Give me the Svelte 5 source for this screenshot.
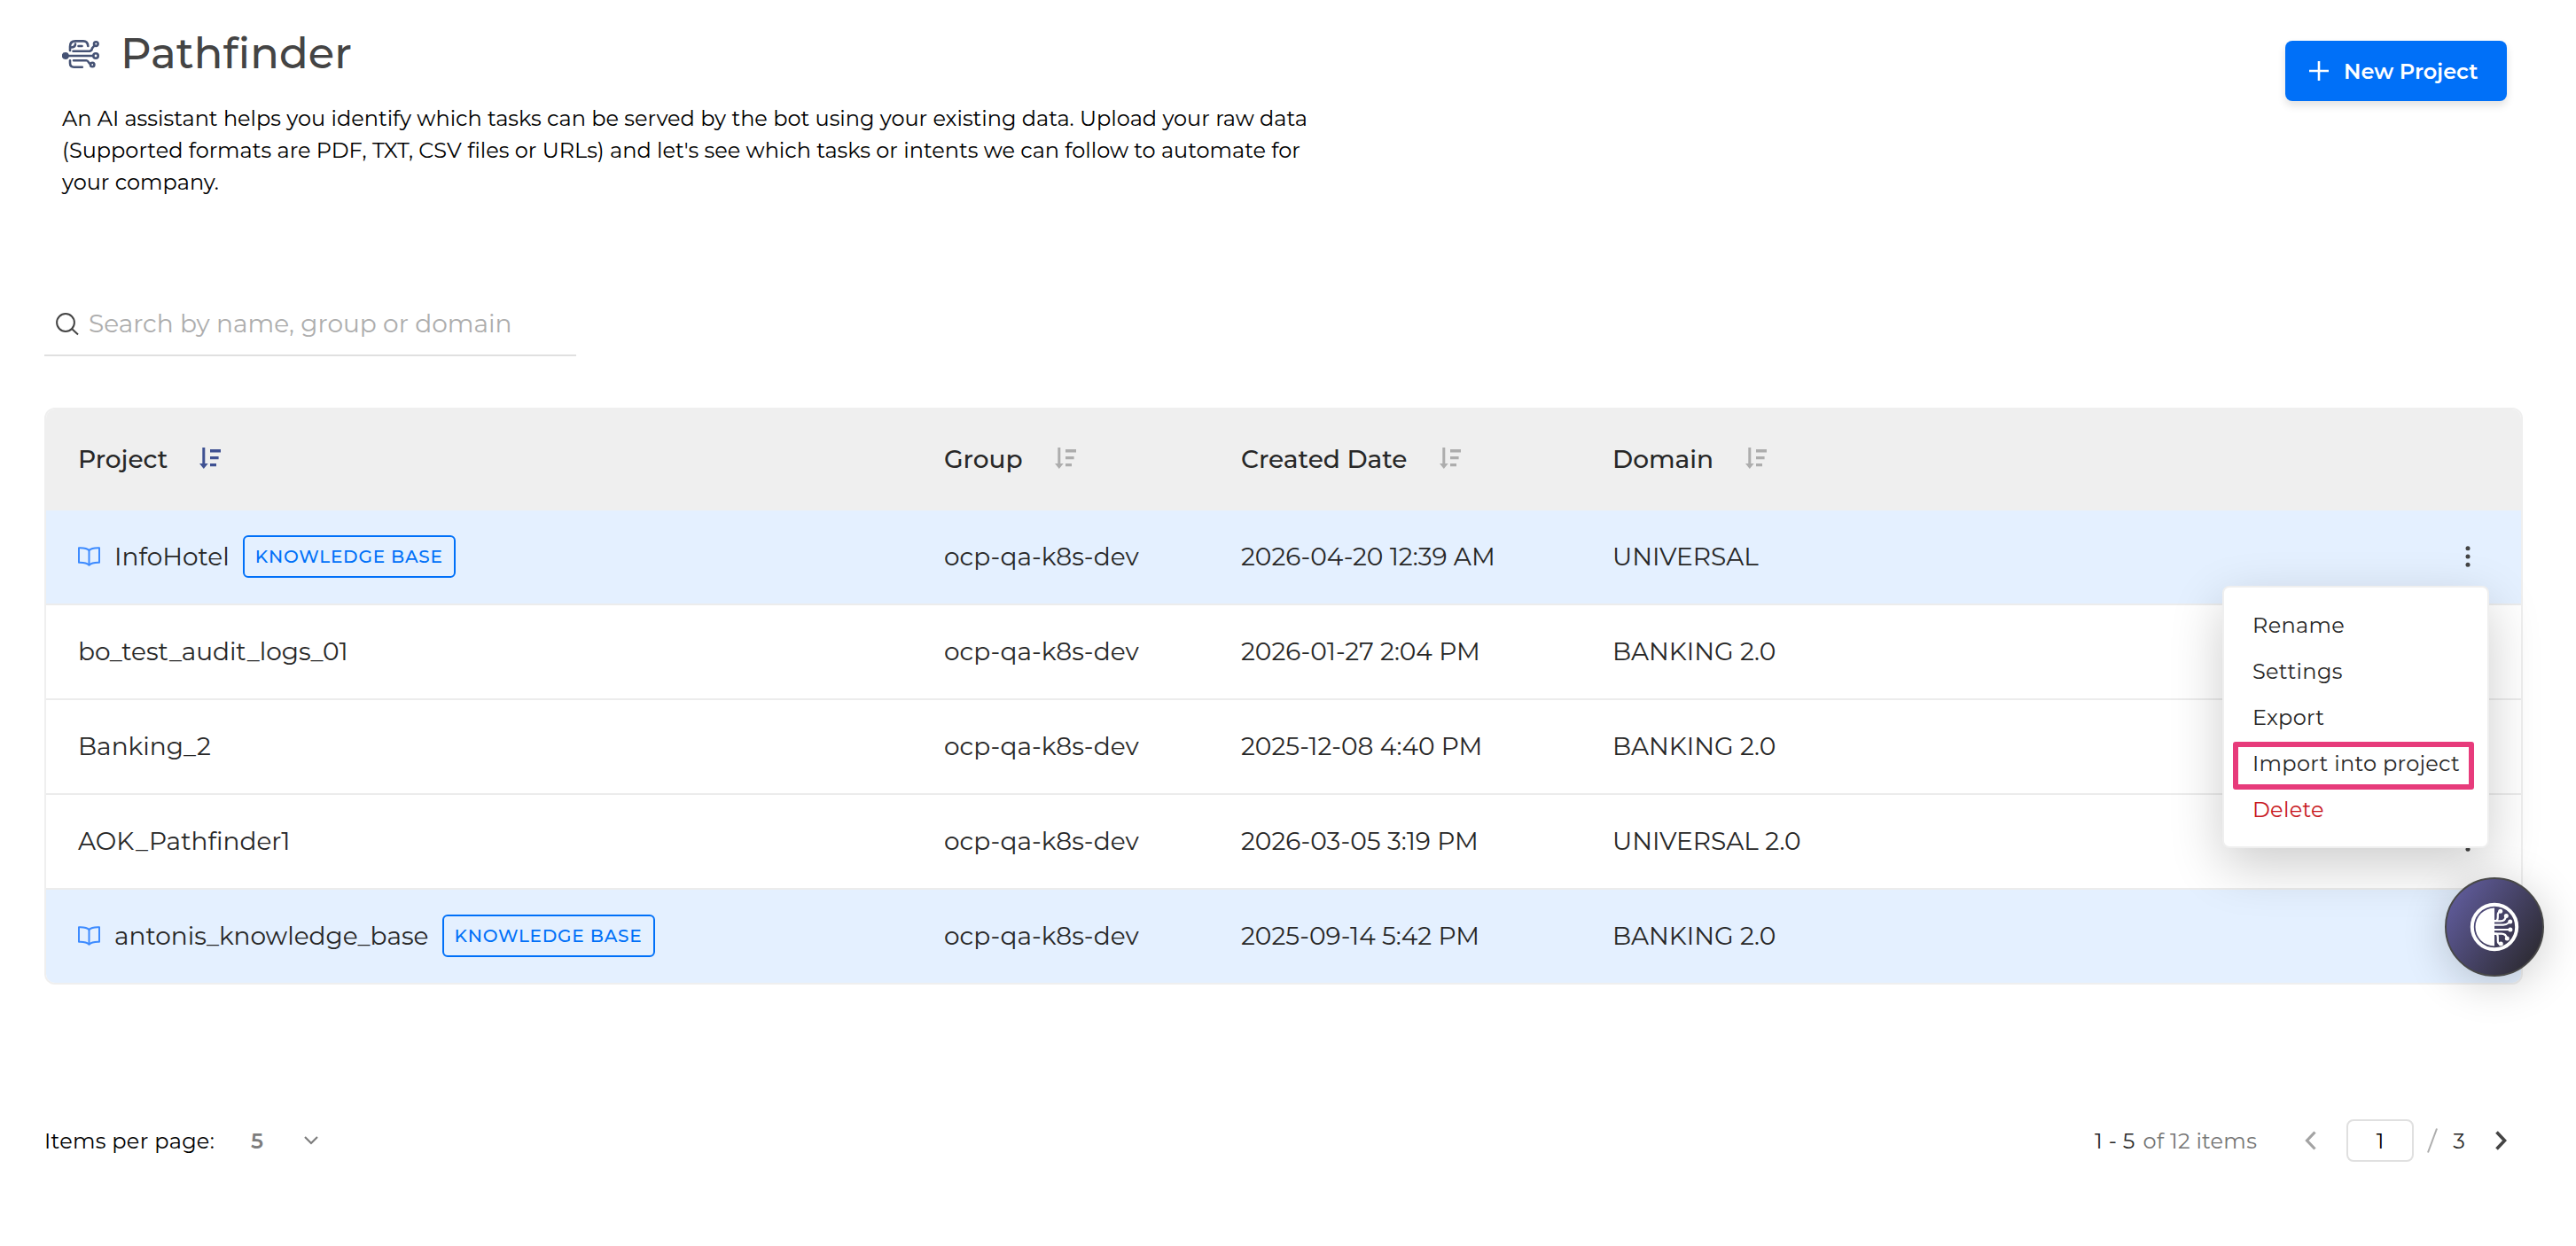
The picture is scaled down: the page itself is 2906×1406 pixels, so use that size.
<script>
  let search = '';
  let page = 1;
  let openMenu = 0;

  const columns = [
    { title: 'Project', active: true },
    { title: 'Group' },
    { title: 'Created Date' },
    { title: 'Domain' }
  ];

  const projects = [
    { name: 'InfoHotel', group: 'ocp-qa-k8s-dev', created: '2026-04-20 12:39 AM', domain: 'UNIVERSAL', kb: true },
    { name: 'bo_test_audit_logs_01', group: 'ocp-qa-k8s-dev', created: '2026-01-27 2:04 PM', domain: 'BANKING 2.0' },
    { name: 'Banking_2', group: 'ocp-qa-k8s-dev', created: '2025-12-08 4:40 PM', domain: 'BANKING 2.0' },
    { name: 'AOK_Pathfinder1', group: 'ocp-qa-k8s-dev', created: '2026-03-05 3:19 PM', domain: 'UNIVERSAL 2.0' },
    { name: 'antonis_knowledge_base', group: 'ocp-qa-k8s-dev', created: '2025-09-14 5:42 PM', domain: 'BANKING 2.0', kb: true }
  ];

  const actions = [
    { label: 'Rename' },
    { label: 'Settings' },
    { label: 'Export' },
    { label: 'Import into project', highlight: true },
    { label: 'Delete', danger: true }
  ];

  function toggleMenu(index) {
    openMenu = openMenu === index ? -1 : index;
  }
</script>

<main>
  <header>
    <div class="intro">
      <div class="title">
        <svg class="brain" viewBox="0 0 42 32" fill="none" stroke="#465375" stroke-width="2.6" stroke-linecap="round" stroke-linejoin="round">
          <path d="M9 12V7.5C9 3.5 11.5 1.4 15 1.4h9c3.2 0 5 1.8 5.3 5.6" />
          <path d="M10 8.5c3 0 5-1.5 5-4M18.5 7h4" />
          <path d="M12.5 12.8h17c3 0 4.3-1.5 4.5-3.5l2-2.3" />
          <circle cx="38.3" cy="4.6" r="2.3" />
          <circle cx="3.8" cy="18" r="2.7" fill="#465375" />
          <path d="M5 18h30" />
          <circle cx="38" cy="18" r="2.7" />
          <path d="M13 23.3h14.5c2.5 0 2.5 3.7 4.5 3.7" />
          <circle cx="34.2" cy="28" r="2.2" />
          <path d="M9 23.3v3c0 3 1.8 4.4 4.3 4.4h9.5" />
        </svg>
        <h1>Pathfinder</h1>
      </div>
      <p>
        An AI assistant helps you identify which tasks can be served by the bot using your existing data. Upload your raw data
        (Supported formats are PDF, TXT, CSV files or URLs) and let's see which tasks or intents we can follow to automate for
        your company.
      </p>
    </div>
    <button class="new-project">
      <svg viewBox="0 0 22 22" stroke="#fff" stroke-width="2.6"><path d="M11 0v22M0 11h22" /></svg>
      <span>New Project</span>
    </button>
  </header>

  <div class="search">
    <svg viewBox="0 0 26 26" fill="none" stroke="#444" stroke-width="2">
      <circle cx="11" cy="11" r="9.9" />
      <path d="M18 18l7 6.5" />
    </svg>
    <input placeholder="Search by name, group or domain" bind:value={search} />
  </div>

  <div class="table">
    <div class="row head">
      {#each columns as column}
        <div class="cell">
          <span>{column.title}</span>
          <svg class="sort" class:active={column.active} viewBox="0 0 24 24">
            <path d="M3.3 0h3v18h3.4L4.8 24 0 18h3.3z" />
            <path d="M12 2h12v3.4H12zM12 10h9.6v3.2H12zM12 18h7v3.2h-7z" />
          </svg>
        </div>
      {/each}
    </div>

    {#each projects as project, i}
      <div class="row" class:kb={project.kb}>
        <div class="cell">
          {#if project.kb}
            <svg class="book" viewBox="0 0 25 22" fill="none" stroke="#3d8bff" stroke-width="2" stroke-linejoin="round">
              <path d="M12.5 4C10.5 1.8 6 1 1 1.2v16.5c4.6-.2 9 .5 11.500 3 2.500-2.500 6.900-3.200 11.500-3V1.2C19 1 14.500 1.8 12.500 4z" />
              <path d="M12.5 4v16.5" />
            </svg>
          {/if}
          <span>{project.name}</span>
          {#if project.kb}
            <span class="badge">KNOWLEDGE BASE</span>
          {/if}
        </div>
        <div class="cell">{project.group}</div>
        <div class="cell">{project.created}</div>
        <div class="cell">{project.domain}</div>
        <button class="dots" aria-label="Actions" on:click={() => toggleMenu(i)}>
          <svg viewBox="0 0 6 24" fill="#444">
            <circle cx="3" cy="2.7" r="2.5" /><circle cx="3" cy="12" r="2.5" /><circle cx="3" cy="21.3" r="2.5" />
          </svg>
        </button>
        {#if openMenu === i}
          <ul class="menu">
            {#each actions as action}
              <li class:highlight={action.highlight} class:danger={action.danger}>{action.label}</li>
            {/each}
          </ul>
        {/if}
      </div>
    {/each}
  </div>

  <footer>
    <span class="per-page">Items per page:</span>
    <span class="size">5</span>
    <svg class="chevron" viewBox="0 0 16 10" fill="none" stroke="#7d7d7d" stroke-width="2.2"><path d="M1 1l7 7 7-7" /></svg>
    <span class="range">1 - 5</span>
    <span class="total">of 12 items</span>
    <svg class="prev" viewBox="0 0 13 22" fill="none" stroke="#a3a3a3" stroke-width="3.2"><path d="M11.5 1.5L2.5 11l9 9.5" /></svg>
    <input class="page" bind:value={page} />
    <svg class="slash" viewBox="0 0 12 28" stroke="#adadad" stroke-width="2"><path d="M11 .5L1 27.5" /></svg>
    <span class="pages">3</span>
    <svg class="next" viewBox="0 0 13 22" fill="none" stroke="#444" stroke-width="3.6"><path d="M1.5 1.5L10.5 11l-9 9.5" /></svg>
  </footer>
</main>

<button class="assistant" aria-label="Assistant">
  <svg viewBox="0 0 56 56" fill="none" stroke="#fff" stroke-width="2.2" stroke-linecap="round">
    <circle cx="28" cy="28" r="25.2" stroke-width="4" />
    <path d="M28 6.5a21.5 21.5 0 0 0 0 43z" fill="#fff" stroke="none" />
    <path d="M28 21h1.5c2 0 2.3-1.5 2.3-4v-3c0-2 1-3 3-4" />
    <path d="M28 21.3h7c4 0 5.5-2 6-6" />
    <path d="M28 25.7h10c3.5 0 5-1.5 7.5-3.5" />
    <path d="M28 31h18" />
    <path d="M28 35.7h8c4 0 5.500 2 6 5.500" />
    <path d="M28 35.7h1.500c2 0 2.300 1.500 2.300 4v4c0 2 1 3.500 3.500 4" />
    <g fill="#fff" stroke="none">
      <circle cx="34.7" cy="10.2" r="2.5" />
      <circle cx="41.3" cy="15.6" r="2.5" />
      <circle cx="45.7" cy="22" r="2.5" />
      <circle cx="45.9" cy="31" r="2.5" />
      <circle cx="42.3" cy="41" r="2.5" />
      <circle cx="35.3" cy="47" r="2.5" />
    </g>
  </svg>
</button>

<style>
  :global(body) {
    margin: 0;
    background: #fff;
  }

  main {
    box-sizing: border-box;
    width: 2906px;
    height: 1406px;
    padding: 33px 60px 0 50px;
    font-family: 'Montserrat', 'Inter', sans-serif;
    font-size: 24px;
    color: #272727;
  }

  button {
    font: inherit;
    border: none;
    cursor: pointer;
  }

  input {
    font: inherit;
    border: none;
    outline: none;
    background: none;
  }

  header {
    display: flex;
    justify-content: space-between;
    align-items: flex-start;
    height: 297px;
    padding: 0 18px 0 20px;
  }

  .title {
    display: flex;
    align-items: center;
    gap: 24px;
    height: 54px;
  }

  .brain {
    width: 42px;
    height: 32px;
    margin-top: 2px;
  }

  h1 {
    margin: 0;
    font-size: 48px;
    font-weight: 500;
    line-height: 54px;
    letter-spacing: 0.1px;
    color: #444;
  }

  p {
    width: 1425px;
    margin: 29px 0 0;
    line-height: 36px;
    color: #000;
  }

  .new-project {
    display: flex;
    align-items: center;
    gap: 17px;
    width: 250px;
    height: 68px;
    margin-top: 13px;
    padding: 0 0 0 27px;
    border-radius: 8px;
    background: #0070f8;
    color: #fff;
    font-weight: 600;
    white-space: nowrap;
    box-shadow: 0 5px 10px rgba(0, 0, 0, 0.12);
  }

  .new-project svg {
    width: 22px;
    height: 22px;
  }

  .search {
    display: flex;
    align-items: center;
    box-sizing: border-box;
    width: 600px;
    height: 72px;
    padding-left: 13px;
    border-bottom: 2px solid #e0e0e0;
  }

  .search svg {
    width: 26px;
    height: 26px;
    margin-top: 2px;
  }

  .search input {
    width: 520px;
    padding: 0 0 0 11px;
    font-size: 28px;
  }

  .search input::placeholder {
    color: #adadad;
    opacity: 1;
  }

  .table {
    margin-top: 58px;
    border: 2px solid #efefef;
    border-radius: 12px;
    font-size: 28px;
  }

  .row {
    position: relative;
    display: grid;
    grid-template-columns: 977px 335px 419px 1fr 60px;
    height: 105px;
    padding: 0 30px 0 36px;
    border-bottom: 2px solid #ececec;
  }

  .row:last-child {
    border-bottom: none;
    border-radius: 0 0 10px 10px;
  }

  .row.kb {
    background: #e4f0ff;
  }

  .row.head {
    height: 114px;
    border: none;
    border-radius: 10px 10px 0 0;
    background: #efefef;
    font-weight: 500;
  }

  .cell {
    display: flex;
    align-items: center;
    padding-bottom: 1px;
    white-space: nowrap;
  }

  .head .cell {
    padding-bottom: 3px;
  }

  .sort {
    width: 24px;
    height: 24px;
    margin: -1px 0 0 36px;
    fill: #adadad;
  }

  .sort.active {
    fill: #3f5192;
  }

  .book {
    width: 25px;
    height: 22px;
    margin-right: 16px;
  }

  .badge {
    box-sizing: border-box;
    width: 240px;
    height: 48px;
    margin-left: 15px;
    padding-left: 12px;
    border: 2px solid #0070f8;
    border-radius: 6px;
    font-size: 20px;
    font-weight: 500;
    line-height: 44px;
    letter-spacing: 0.8px;
    color: #0070f8;
  }

  .dots {
    display: flex;
    align-items: center;
    justify-content: center;
    padding: 0 0 1px;
    background: none;
  }

  .dots svg {
    width: 6px;
    height: 24px;
  }

  .menu {
    position: absolute;
    z-index: 2;
    top: 85px;
    right: 36px;
    box-sizing: border-box;
    width: 301px;
    height: 296px;
    margin: 0;
    padding: 17px 10px;
    border: 2px solid #efefef;
    border-radius: 8px;
    background: #fff;
    box-shadow: 0 20px 60px rgba(0, 0, 0, 0.2);
    font-size: 24px;
    letter-spacing: 0.3px;
    list-style: none;
  }

  .menu li {
    box-sizing: border-box;
    width: 272px;
    height: 52px;
    padding-left: 22px;
    line-height: 52px;
    white-space: nowrap;
  }

  .menu .highlight {
    height: 54px;
    margin: 1px 0 -3px;
    padding-left: 16px;
    border: 6px solid #e73b7b;
    border-radius: 3px;
    line-height: 38px;
  }

  .menu .danger {
    color: #c8171e;
  }

  footer {
    display: flex;
    align-items: center;
    height: 48px;
    margin-top: 152px;
    padding-right: 18px;
    letter-spacing: 0.3px;
    white-space: nowrap;
  }

  .per-page {
    width: 233px;
    color: #000;
  }

  .size {
    width: 60px;
    font-weight: 600;
    color: #7d7d7d;
  }

  .chevron {
    width: 16px;
    height: 10px;
  }

  .range {
    margin-left: auto;
  }

  .total {
    margin-left: 9px;
    color: #757575;
  }

  .prev {
    width: 13px;
    height: 22px;
    margin-left: 54px;
  }

  .page {
    box-sizing: border-box;
    width: 76px;
    height: 48px;
    margin-left: 34px;
    padding: 0;
    border: 2px solid #e0e0e0;
    border-radius: 8px;
    color: #000;
    text-align: center;
  }

  .slash {
    width: 12px;
    height: 28px;
    margin: 0 17px 0 15px;
  }

  .next {
    width: 13px;
    height: 22px;
    margin-left: 34px;
  }

  .assistant {
    position: absolute;
    z-index: 3;
    top: 990px;
    left: 2758px;
    display: flex;
    align-items: center;
    justify-content: center;
    width: 112px;
    height: 112px;
    padding: 0;
    border: 2px solid #484848;
    border-radius: 50%;
    background: linear-gradient(125deg, #5c5894 15%, #2e2c35 88%);
    box-shadow: 0 8px 50px rgba(0, 0, 0, 0.2);
  }

  .assistant svg {
    width: 56px;
    height: 56px;
  }
</style>
